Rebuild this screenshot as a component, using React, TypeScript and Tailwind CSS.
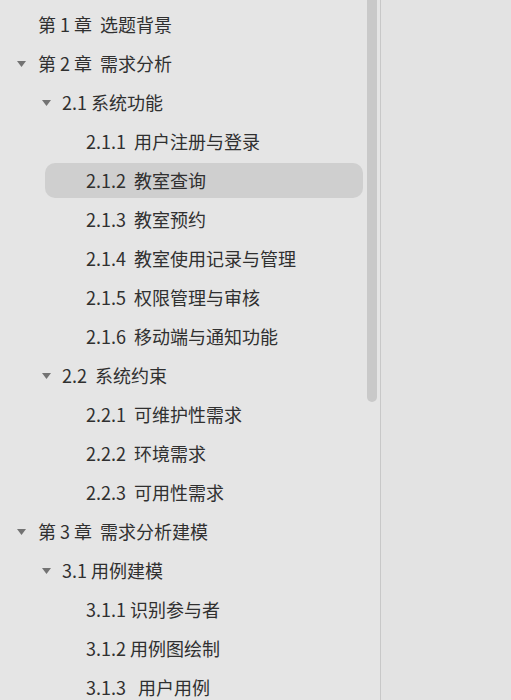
import React from 'react';

type Item = { level: 1 | 2 | 3; text: string; open?: boolean; active?: boolean };

const items: Item[] = [
  { level: 1, text: '第 1 章  选题背景' },
  { level: 1, text: '第 2 章  需求分析', open: true },
  { level: 2, text: '2.1 系统功能', open: true },
  { level: 3, text: '2.1.1  用户注册与登录' },
  { level: 3, text: '2.1.2  教室查询', active: true },
  { level: 3, text: '2.1.3  教室预约' },
  { level: 3, text: '2.1.4  教室使用记录与管理' },
  { level: 3, text: '2.1.5  权限管理与审核' },
  { level: 3, text: '2.1.6  移动端与通知功能' },
  { level: 2, text: '2.2  系统约束', open: true },
  { level: 3, text: '2.2.1  可维护性需求' },
  { level: 3, text: '2.2.2  环境需求' },
  { level: 3, text: '2.2.3  可用性需求' },
  { level: 1, text: '第 3 章  需求分析建模', open: true },
  { level: 2, text: '3.1 用例建模', open: true },
  { level: 3, text: '3.1.1 识别参与者' },
  { level: 3, text: '3.1.2 用例图绘制' },
  { level: 3, text: '3.1.3   用户用例' },
];

const Caret = () => (
  <svg width="9" height="6" viewBox="0 0 9 6" className="shrink-0">
    <polygon points="0,0 9,0 4.5,6" fill="#737373" />
  </svg>
);

const Row: React.FC<{ item: Item }> = ({ item }) => {
  const label = <span className="whitespace-pre">{item.text}</span>;

  if (item.level === 3) {
    return (
      <div className="h-[39px] flex items-center">
        <div
          className={`ml-[45px] w-[318px] h-[35px] flex items-center pl-[41px] rounded-[10px] ${
            item.active ? 'bg-[#cfcfcf]' : ''
          }`}
        >
          {label}
        </div>
      </div>
    );
  }

  const pad = item.level === 1 ? 'pl-[17px]' : 'pl-[42px]';
  const slot = item.level === 1 ? 'w-[21px]' : 'w-[20px]';

  return (
    <div className={`h-[39px] flex items-center ${pad}`}>
      <div className={`${slot} flex items-center`}>{item.open && <Caret />}</div>
      {label}
    </div>
  );
};

export default function App() {
  return (
    <div
      className="w-[511px] h-[700px] overflow-hidden flex bg-[#e4e4e4] text-[#303030] text-[18px]"
      style={{ fontFamily: '"Noto Sans CJK SC", "Noto Sans", sans-serif' }}
    >
      {/* Outline panel */}
      <div className="w-[381px] h-full flex border-r border-[#c8c8c8] bg-[#e5e5e5]">
        <div className="w-[367px] pt-[5px]">
          {items.map((item, i) => (
            <Row key={i} item={item} />
          ))}
        </div>
        <div className="w-[10px]">
          <div className="h-[402px] bg-[#c9c9c9] rounded-b-[5px]" />
        </div>
      </div>

      {/* Editor area */}
      <div className="flex-1 h-full bg-[#e3e3e3]" />
    </div>
  );
}
